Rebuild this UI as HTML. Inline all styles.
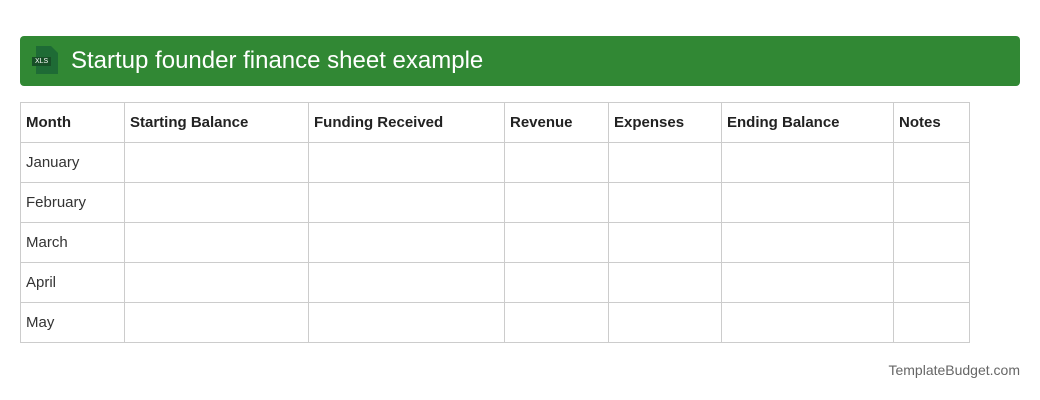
<!DOCTYPE html>
<html><head><style>
body{margin:0;width:1040px;height:400px;background:#fff;font-family:"Liberation Sans",sans-serif;position:relative}
.hd{position:absolute;left:20px;top:36px;width:1000px;height:50px;background:#318834;border-radius:4px}
.hd span{position:absolute;left:51px;top:11px;color:#fff;font-size:24px}
.ic{position:absolute;left:16px;top:10px;width:22px;height:28px;background:#1e6b35;clip-path:polygon(0 0,15px 0,22px 7px,22px 28px,0 28px)}
table{position:absolute;left:20px;top:102px;border-collapse:collapse;font-size:15px;color:#333}
td,th{border:1px solid #ccc;height:39px;padding:0 5px;text-align:left;box-sizing:content-box}
th{font-weight:bold;color:#222}
.f{position:absolute;right:20px;top:362px;font-size:14px;color:#666}
</style></head><body>
<div class="hd"><div class="ic"></div><div style="position:absolute;left:12px;top:21px;background:#174f27;color:#fff;font-size:7px;padding:0 3px;line-height:9px">XLS</div><span>Startup founder finance sheet example</span></div>
<table>
<tr><th style="width:93px">Month</th><th style="width:173px">Starting Balance</th><th style="width:185px">Funding Received</th><th style="width:93px">Revenue</th><th style="width:102px">Expenses</th><th style="width:161px">Ending Balance</th><th style="width:65px">Notes</th></tr>
<tr><td>January</td><td></td><td></td><td></td><td></td><td></td><td></td></tr>
<tr><td>February</td><td></td><td></td><td></td><td></td><td></td><td></td></tr>
<tr><td>March</td><td></td><td></td><td></td><td></td><td></td><td></td></tr>
<tr><td>April</td><td></td><td></td><td></td><td></td><td></td><td></td></tr>
<tr><td>May</td><td></td><td></td><td></td><td></td><td></td><td></td></tr>
</table>
<div class="f">TemplateBudget.com</div>
</body></html>
